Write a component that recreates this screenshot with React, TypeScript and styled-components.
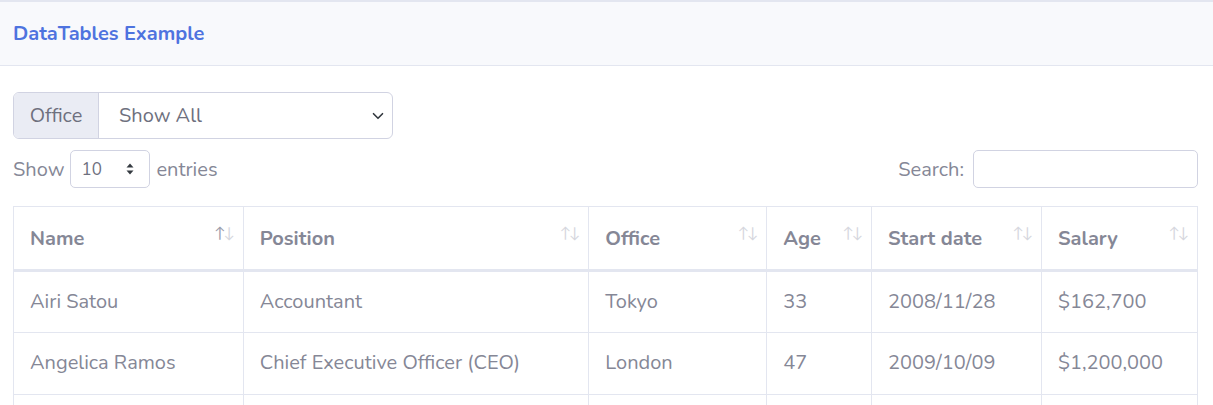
import React from 'react'
import styled, { createGlobalStyle } from 'styled-components'

const GlobalStyle = createGlobalStyle`
  html, body {
    margin: 0;
    padding: 0;
    background: #fff;
  }
  body {
    font-family: "Nunito", "Lato", "Noto Sans", sans-serif;
    color: #858796;
    font-size: 20px;
  }
`

const Card = styled.div`
  border-top: 2px solid #e3e6f0;
  background: #fff;
`

const CardHeader = styled.div`
  height: 63px;
  display: flex;
  align-items: center;
  padding: 0 13px;
  background: #f8f9fc;
  border-bottom: 1px solid #e3e6f0;
  color: #4e73df;
  font-weight: 700;
  font-size: 20px;
`

const CardBody = styled.div`
  padding: 26px 15px 0 13px;
`

const InputGroup = styled.div`
  display: flex;
  width: 380px;
  height: 47px;
  border: 1px solid #d1d3e2;
  border-radius: 6px;
  box-sizing: border-box;
  overflow: hidden;
`

const Prepend = styled.div`
  width: 84px;
  display: flex;
  align-items: center;
  justify-content: center;
  background: #eaecf4;
  border-right: 1px solid #d1d3e2;
  color: #6e707e;
`

const FakeSelect = styled.div`
  flex: 1;
  display: flex;
  align-items: center;
  justify-content: space-between;
  padding: 0 8px 0 20px;
  color: #6e707e;
`

const ControlsRow = styled.div`
  display: flex;
  justify-content: space-between;
  align-items: center;
  margin-top: 10px;
  height: 40px;
`

const Label = styled.label`
  display: flex;
  align-items: center;
  gap: 6px;
  color: #858796;
`

const SmallSelect = styled.div`
  width: 80px;
  height: 38px;
  box-sizing: border-box;
  border: 1px solid #d1d3e2;
  border-radius: 5px;
  display: flex;
  align-items: center;
  justify-content: space-between;
  padding: 0 14px 0 10px;
  color: #6e707e;
  font-size: 17px;
`

const SearchInput = styled.input`
  width: 225px;
  height: 38px;
  box-sizing: border-box;
  border: 1px solid #d1d3e2;
  border-radius: 5px;
  margin-left: 3px;
  outline: none;
`

const Table = styled.table`
  margin-top: 17px;
  width: 1185px;
  border-collapse: collapse;
  border: 1px solid #e3e6f0;
`

const Th = styled.th<{ $w: number }>`
  width: ${p => p.$w}px;
  height: 64px;
  box-sizing: border-box;
  text-align: left;
  font-weight: 700;
  padding: 0 16px;
  border: 1px solid #e3e6f0;
  border-bottom: 3px solid #e3e6f0;
  position: relative;
  color: #858796;
`

const Sort = styled.span`
  position: absolute;
  right: 10px;
  top: 16px;
  font-size: 15px;
  letter-spacing: -2px;
  font-weight: 400;
`

const Arrow = styled.span<{ $active?: boolean }>`
  color: ${p => (p.$active ? '#9a9cab' : '#d6d7de')};
`

const Td = styled.td`
  height: 62px;
  box-sizing: border-box;
  padding: 0 16px 2px;
  border: 1px solid #e3e6f0;
  color: #858796;
`

const Chevron = () => (
  <svg width="12" height="12" viewBox="0 0 16 16">
    <path d="M2 5l6 6 6-6" fill="none" stroke="#343a40" strokeWidth="2.2" strokeLinecap="round" strokeLinejoin="round" />
  </svg>
)

const Updown = () => (
  <svg width="10" height="14" viewBox="0 0 10 14">
    <path d="M1.5 5.5L5 1.5l3.5 4z" fill="#343a40" />
    <path d="M1.5 8.5L5 12.5l3.5-4z" fill="#343a40" />
  </svg>
)

const columns = [
  { name: 'Name', w: 230, active: true },
  { name: 'Position', w: 346 },
  { name: 'Office', w: 178 },
  { name: 'Age', w: 105 },
  { name: 'Start date', w: 170 },
  { name: 'Salary', w: 156 },
]

const rows = [
  ['Airi Satou', 'Accountant', 'Tokyo', '33', '2008/11/28', '$162,700'],
  ['Angelica Ramos', 'Chief Executive Officer (CEO)', 'London', '47', '2009/10/09', '$1,200,000'],
  ['Ashton Cox', 'Junior Technical Author', 'San Francisco', '66', '2009/01/12', '$86,000'],
]

export default function App() {
  return (
    <>
      <GlobalStyle />
      <Card>
        <CardHeader>DataTables Example</CardHeader>
        <CardBody>
          <InputGroup>
            <Prepend>Office</Prepend>
            <FakeSelect>
              Show All
              <Chevron />
            </FakeSelect>
          </InputGroup>
          <ControlsRow>
            <Label>
              Show
              <SmallSelect>
                10
                <Updown />
              </SmallSelect>
              entries
            </Label>
            <Label>
              Search:
              <SearchInput type="search" />
            </Label>
          </ControlsRow>
          <Table>
            <thead>
              <tr>
                {columns.map(c => (
                  <Th key={c.name} $w={c.w}>
                    {c.name}
                    <Sort>
                      <Arrow $active={c.active}>↑</Arrow>
                      <Arrow>↓</Arrow>
                    </Sort>
                  </Th>
                ))}
              </tr>
            </thead>
            <tbody>
              {rows.map(r => (
                <tr key={r[0]}>
                  {r.map((v, i) => (
                    <Td key={i}>{v}</Td>
                  ))}
                </tr>
              ))}
            </tbody>
          </Table>
        </CardBody>
      </Card>
    </>
  )
}
